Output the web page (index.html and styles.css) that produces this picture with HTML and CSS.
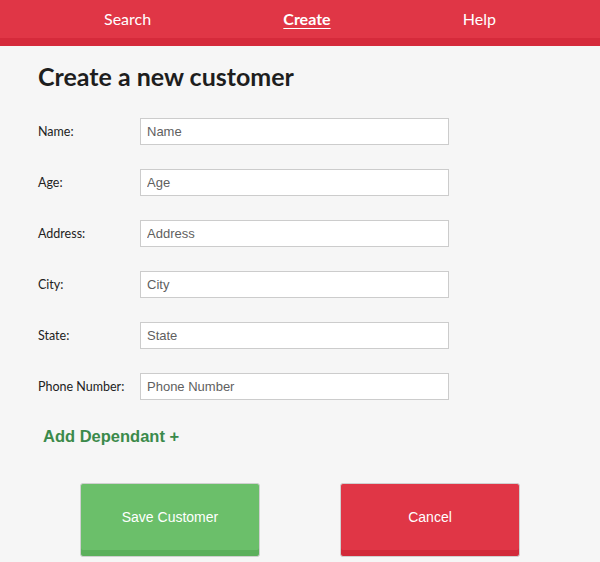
FILE: index.html
```html
<!DOCTYPE html>
<html>
<head>
<meta charset="utf-8">
<link rel="stylesheet" href="styles.css">
</head>
<body>
<nav class="topnav">
  <a class="nav-link">Search</a>
  <a class="nav-link active">Create</a>
  <a class="nav-link">Help</a>
</nav>
<main class="page">
  <h1 class="title">Create a new customer</h1>
  <form class="form">
    <div class="row"><label class="label">Name:</label><input class="field" placeholder="Name"></div>
    <div class="row"><label class="label">Age:</label><input class="field" placeholder="Age"></div>
    <div class="row"><label class="label">Address:</label><input class="field" placeholder="Address"></div>
    <div class="row"><label class="label">City:</label><input class="field" placeholder="City"></div>
    <div class="row"><label class="label">State:</label><input class="field" placeholder="State"></div>
    <div class="row"><label class="label">Phone Number:</label><input class="field" placeholder="Phone Number"></div>
  </form>
  <div class="add-dep">Add Dependant +</div>
  <div class="actions">
    <button class="btn btn-save">Save Customer</button>
    <button class="btn btn-cancel">Cancel</button>
  </div>
</main>
</body>
</html>
```
FILE: styles.css
```css
html, body {
  margin: 0;
  padding: 0;
  background: #f6f6f6;
  height: 100%;
  overflow: hidden;
}
body {
  font-family: Lato, "Open Sans", sans-serif;
}
.topnav {
  display: flex;
  justify-content: space-between;
  align-items: center;
  height: 38px;
  padding: 0 104px;
  background: #e03646;
  border-bottom: 8px solid #d52a3b;
}
.nav-link {
  color: #fff;
  font-size: 16px;
  line-height: 38px;
  text-decoration: none;
}
.nav-link.active {
  font-weight: bold;
  text-decoration: underline;
  text-underline-offset: 3px;
}
.page {
  padding: 0 38px;
}
.title {
  margin: 14px 0 0;
  font-size: 25px;
  line-height: 32px;
  font-weight: bold;
  color: #1e1e1e;
}
.form {
  display: flex;
  flex-direction: column;
  gap: 24px;
  margin-top: 26px;
}
.row {
  display: flex;
  align-items: center;
}
.label {
  width: 102px;
  font-size: 12.5px;
  color: #222;
}
.field {
  box-sizing: border-box;
  width: 309px;
  height: 27px;
  margin: 0;
  padding: 0 6px;
  border: 1px solid #cccccc;
  background: #fff;
  font-family: "Liberation Sans", Arial, sans-serif;
  font-size: 13px;
  color: #333;
  outline: none;
}
.field::placeholder {
  color: #5f5f5f;
}
.add-dep {
  margin: 26px 0 0 5px;
  font-family: "Liberation Sans", Arial, sans-serif;
  font-size: 16.5px;
  font-weight: bold;
  color: #3b8a4b;
  line-height: 20px;
}
.actions {
  display: flex;
  justify-content: center;
  gap: 80px;
  margin: 37px -38px 0;
}
.btn {
  width: 180px;
  height: 74px;
  border: 1px solid #d0d0d0;
  border-radius: 3px;
  font-family: "Liberation Sans", Arial, sans-serif;
  font-size: 14px;
  color: #fff;
  padding: 0 0 6px;
}
.btn-save {
  background: #6bbf6a;
  box-shadow: inset 0 -6px 0 #5cb05c;
}
.btn-cancel {
  background: #e03646;
  box-shadow: inset 0 -6px 0 #d22a3a;
}
```
